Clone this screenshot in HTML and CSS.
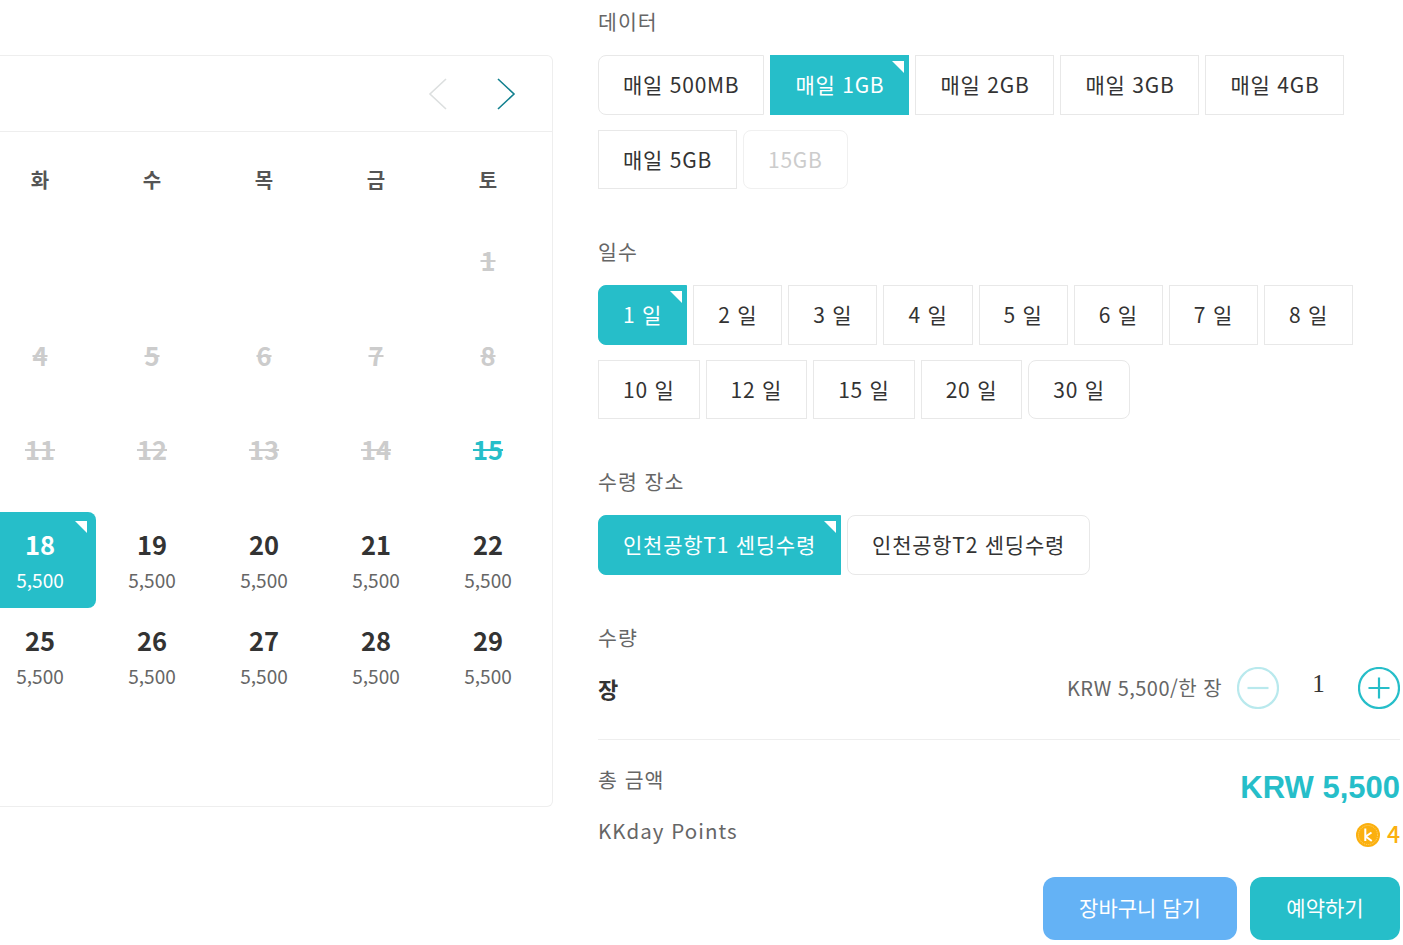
FILE: index.html

```html
<!DOCTYPE html>
<html lang="ko">
<head>
    <meta charset="UTF-8">
    <meta name="viewport" content="width=device-width, initial-scale=1.0">
    <title>KKday 예약</title>
    <link rel="stylesheet" href="styles.css">
</head>
<body>
    <div class="page">
        <div class="calendar">
            <div class="cal-head">
                <svg class="arrow" width="20" height="34" viewBox="0 0 20 34"><path d="M18 2 L2 17 L18 32" fill="none" stroke="#dcdfdf" stroke-width="1.6"/></svg>
                <svg class="arrow" width="20" height="34" viewBox="0 0 20 34"><path d="M2 2 L18 17 L2 32" fill="none" stroke="#12808f" stroke-width="1.6"/></svg>
            </div>
            <div class="weekdays">
                <div>화</div><div>수</div><div>목</div><div>금</div><div>토</div>
            </div>
            <div class="days">
                <div class="day"></div><div class="day"></div><div class="day"></div><div class="day"></div>
                <div class="day off"><b>1</b></div>
                <div class="day off"><b>4</b></div>
                <div class="day off"><b>5</b></div>
                <div class="day off"><b>6</b></div>
                <div class="day off"><b>7</b></div>
                <div class="day off"><b>8</b></div>
                <div class="day off"><b>11</b></div>
                <div class="day off"><b>12</b></div>
                <div class="day off"><b>13</b></div>
                <div class="day off"><b>14</b></div>
                <div class="day off today"><b>15</b></div>
                <div class="day open picked"><b>18</b><span>5,500</span></div>
                <div class="day open"><b>19</b><span>5,500</span></div>
                <div class="day open"><b>20</b><span>5,500</span></div>
                <div class="day open"><b>21</b><span>5,500</span></div>
                <div class="day open"><b>22</b><span>5,500</span></div>
                <div class="day open"><b>25</b><span>5,500</span></div>
                <div class="day open"><b>26</b><span>5,500</span></div>
                <div class="day open"><b>27</b><span>5,500</span></div>
                <div class="day open"><b>28</b><span>5,500</span></div>
                <div class="day open"><b>29</b><span>5,500</span></div>
            </div>
        </div>

        <div class="options">
            <div class="section">
                <div class="label">데이터</div>
                <div class="chips">
                    <div class="chip first">매일 500MB</div>
                    <div class="chip on">매일 1GB</div>
                    <div class="chip">매일 2GB</div>
                    <div class="chip">매일 3GB</div>
                    <div class="chip">매일 4GB</div>
                    <div class="chip">매일 5GB</div>
                    <div class="chip last disabled">15GB</div>
                </div>
            </div>
            <div class="section">
                <div class="label">일수</div>
                <div class="chips">
                    <div class="chip first on">1 일</div>
                    <div class="chip">2 일</div>
                    <div class="chip">3 일</div>
                    <div class="chip">4 일</div>
                    <div class="chip">5 일</div>
                    <div class="chip">6 일</div>
                    <div class="chip">7 일</div>
                    <div class="chip">8 일</div>
                    <div class="chip">10 일</div>
                    <div class="chip">12 일</div>
                    <div class="chip">15 일</div>
                    <div class="chip">20 일</div>
                    <div class="chip last">30 일</div>
                </div>
            </div>
            <div class="section pickup">
                <div class="label">수령 장소</div>
                <div class="chips">
                    <div class="chip first on">인천공항T1 센딩수령</div>
                    <div class="chip last">인천공항T2 센딩수령</div>
                </div>
            </div>

            <div class="label">수량</div>
            <div class="qty-row">
                <div class="unit">장</div>
                <div class="unit-price">KRW 5,500/한 장</div>
                <svg class="qty-btn" width="42" height="42" viewBox="0 0 42 42"><circle cx="21" cy="21" r="20" fill="none" stroke="#b9e9ed" stroke-width="2.200"/><path d="M10.500 21 H31.500" stroke="#b9e9ed" stroke-width="2.200"/></svg>
                <div class="qty">1</div>
                <svg class="qty-btn" width="42" height="42" viewBox="0 0 42 42"><circle cx="21" cy="21" r="20" fill="none" stroke="#26bec9" stroke-width="2.200"/><path d="M10.500 21 H31.500 M21 10.500 V31.500" stroke="#26bec9" stroke-width="2.200"/></svg>
            </div>

            <div class="total-row">
                <div class="label">총 금액</div>
                <div class="total">KRW 5,500</div>
            </div>
            <div class="points-row">
                <div class="label">KKday Points</div>
                <div class="points">
                    <svg width="24" height="24" viewBox="0 0 24 24"><circle cx="12" cy="12" r="12" fill="#fbb00f"/><circle cx="12" cy="12" r="9.500" fill="none" stroke="#ffe09a" stroke-width="0.700" stroke-dasharray="1 1"/><path d="M9.300 5.500 V18 M15.500 9.500 L9.800 13.500 L15.800 18" fill="none" stroke="#fff" stroke-width="2"/></svg>
                    <span>4</span>
                </div>
            </div>
            <div class="actions">
                <button class="btn-cart">장바구니 담기</button>
                <button class="btn-book">예약하기</button>
            </div>
        </div>
    </div>
</body>
</html>
```

FILE: styles.css

```css
* { box-sizing: border-box; }
html, body { margin: 0; height: 945px; overflow: hidden; background: #fff; }
body { font-family: "Noto Sans CJK KR", "Noto Sans", sans-serif; color: #333; }

.page { display: flex; align-items: flex-start; }

/* calendar, cut off by the left edge of the window */
.calendar {
    width: 553px;
    height: 752px;
    margin-top: 55px;
    border: 1px solid #eee;
    border-left: none;
    border-radius: 0 6px 6px 0;
    overflow: hidden;
}
.cal-head {
    height: 76px;
    border-bottom: 1px solid #eee;
    display: flex;
    justify-content: flex-end;
    align-items: center;
    gap: 48px;
    padding-right: 36px;
    padding-top: 1px;
}
.weekdays, .days {
    display: grid;
    grid-template-columns: repeat(5, 112px);
    margin-left: -16px;
}
.weekdays {
    height: 96px;
    align-items: center;
    justify-items: center;
    font-size: 20px;
    font-weight: 700;
    color: #555;
    padding-bottom: 2px;
}
.days { grid-template-rows: repeat(3, 94.667px) repeat(2, 96px); }
.day {
    display: flex;
    flex-direction: column;
    align-items: center;
    position: relative;
    padding-top: 13px;
}
.day b { font-size: 25.500px; font-weight: 700; line-height: 38px; }
.day span { font-size: 19px; line-height: 26px; margin-top: 4px; color: #666; }
.off b { color: #ccc; font-weight: 700; text-decoration: line-through; }
.today b { color: #26bec9; }
.picked { background: #26bec9; border-radius: 0 8px 8px 0; }
.picked b, .picked span { color: #fff; }
.picked::after, .chip.on::after {
    content: "";
    position: absolute;
    top: 9px;
    right: 9px;
    border-style: solid;
    border-width: 0 12px 12px 0;
    border-color: transparent #fff transparent transparent;
}

/* right column */
.options { width: 802px; margin-left: 45px; }
.label { font-size: 20.500px; line-height: 30px; letter-spacing: 1.050px; color: #666; font-weight: 400; }
.section { height: 230px; padding-top: 6px; }
.section .label { margin-bottom: 19.200px; }
.section.pickup { height: 162px; }
.chips { display: flex; flex-wrap: wrap; gap: 15.200px 6px; }
.chip {
    position: relative;
    height: 59.400px;
    padding: 0 24px 1.400px;
    border: 1px solid #e8e8e8;
    font-size: 21px;
    letter-spacing: 0.760px;
    display: flex;
    align-items: center;
    color: #333;
}
.chip.first { border-radius: 8px 0 0 8px; }
.chip.last { border-radius: 8px; }
.chip.on { background: #26bec9; border-color: #26bec9; color: #fff; }
.chip.on::after { top: 5px; right: 4px; }
.chip.disabled { color: #ccc; border-color: #f0f0f0; }

.qty-row {
    display: flex;
    align-items: center;
    margin-top: 3px;
    height: 65px;
}
.unit { font-size: 22px; font-weight: 700; color: #333; margin-right: auto; }
.unit-price { font-size: 20px; letter-spacing: 0.450px; color: #666; margin-right: 15px; }
.qty { width: 79px; text-align: center; font-size: 25px; font-family: "Liberation Serif", serif; color: #333; padding-bottom: 8px; }
.qty-btn { display: block; }

.total-row, .points-row { display: flex; justify-content: space-between; align-items: flex-start; }
.total-row { border-top: 1px solid #eee; margin-top: 19px; padding-top: 24px; height: 74px; }
.total { font-family: "Liberation Sans", Arial, sans-serif; font-size: 31px; font-weight: 700; line-height: 44px; color: #26bec9; margin-top: 2px; }
.points-row { margin-top: 2px; height: 40px; }
.points { display: flex; align-items: center; gap: 7px; font-size: 23px; line-height: 24px; font-weight: 500; color: #fbb00f; margin-top: 8px; }
.points span { margin-top: -4px; }

.actions { display: flex; justify-content: flex-end; gap: 13px; margin-top: 22px; }
button {
    height: 63px;
    border: none;
    border-radius: 12px;
    color: #fff;
    font-family: inherit;
    font-size: 21px;
    padding-bottom: 5px;
}
.btn-cart { width: 194px; background: #64b2f5; }
.btn-book { width: 150px; background: #26bec9; }
```
